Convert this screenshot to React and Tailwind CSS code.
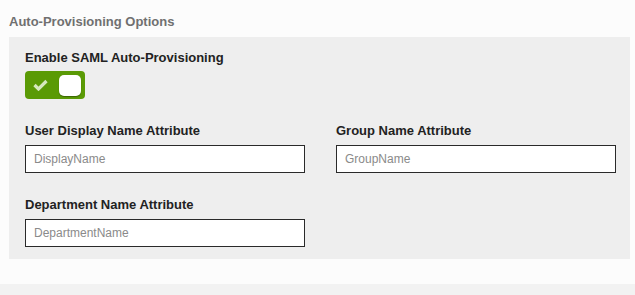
export default function App() {
  return (
    <div className="w-[635px] h-[295px] overflow-hidden bg-[#fcfcfc] font-['Liberation_Sans',Arial,sans-serif]">
      <div className="pl-[9px] pr-[5px]">
        <h2 className="h-[37px] flex items-center pt-[6px] text-[13px] font-bold text-[#707070]">
          Auto-Provisioning Options
        </h2>
        <div className="bg-[#eeeeee] h-[222px] px-[16px] pt-[12px]">
          <div className="text-[13px] font-bold text-[#222] leading-[17px]">Enable SAML Auto-Provisioning</div>
          <button className="mt-[5px] w-[60px] h-[28px] rounded-[4px] bg-[#5a9a05] flex items-center justify-between pl-[8px] pr-[4px]">
            <svg width="15" height="12" viewBox="0 0 15 12">
              <path d="M1.5 6 L5.5 10 L13.5 2" fill="none" stroke="#d6e8bd" strokeWidth="3.2" />
            </svg>
            <span className="w-[22px] h-[21px] rounded-[5px] bg-white shadow-[0_1px_1px_rgba(0,0,0,0.35)]" />
          </button>
          <div className="grid grid-cols-[280px_280px] gap-x-[31px] gap-y-[24px] mt-[24px]">
            <Field label="User Display Name Attribute" placeholder="DisplayName" />
            <Field label="Group Name Attribute" placeholder="GroupName" />
            <Field label="Department Name Attribute" placeholder="DepartmentName" />
          </div>
        </div>
      </div>
      <div className="mt-[25px] h-[20px] bg-[#f2f2f2]" />
    </div>
  );
}

function Field({ label, placeholder }) {
  return (
    <div className="flex flex-col">
      <label className="text-[13px] font-bold text-[#222] leading-[16px]">{label}</label>
      <input
        placeholder={placeholder}
        className="mt-[6px] h-[28px] bg-white border-[1.5px] border-[#2a2a2a] px-[8px] text-[12px] text-[#333] placeholder:text-[#8a8a8a] outline-none"
      />
    </div>
  );
}
